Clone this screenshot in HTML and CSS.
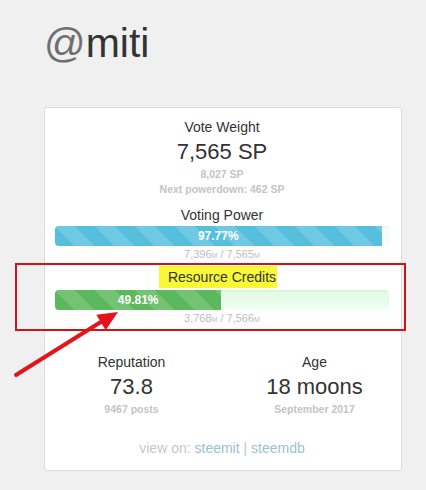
FILE: index.html
```html
<!DOCTYPE html>
<html>
<head>
<meta charset="utf-8">
<link rel="stylesheet" href="styles.css">
</head>
<body>
<div class="page">
  <h1 class="title"><span class="at">@</span>miti</h1>
  <div class="card">
    <div class="label">Vote Weight</div>
    <div class="big">7,565 SP</div>
    <div class="sub">8,027 SP</div>
    <div class="sub">Next powerdown: 462 SP</div>

    <div class="label vp">Voting Power</div>
    <div class="bar bar-blue">
      <div class="fill fill-blue" style="width:97.77%">97.77%</div>
    </div>
    <div class="nums">7,396<small>M</small> / 7,565<small>M</small></div>

    <div class="label rc"><span class="hl">Resource Credits</span></div>
    <div class="bar bar-green">
      <div class="fill fill-green" style="width:49.81%">49.81%</div>
    </div>
    <div class="nums">3,768<small>M</small> / 7,566<small>M</small></div>

    <div class="stats">
      <div class="stat">
        <div class="label">Reputation</div>
        <div class="big">73.8</div>
        <div class="sub">9467 posts</div>
      </div>
      <div class="stat">
        <div class="label">Age</div>
        <div class="big">18 moons</div>
        <div class="sub">September 2017</div>
      </div>
    </div>

    <div class="links">view on: <a href="#">steemit</a> | <a href="#">steemdb</a></div>
  </div>
</div>
<div class="redbox"></div>
<svg class="arrow" width="426" height="490" viewBox="0 0 426 490">
  <line x1="16" y1="375" x2="104" y2="320" stroke="#e3151a" stroke-width="4" stroke-linecap="round"/>
  <polygon points="118,312 105.7,330.2 96.3,314.8" fill="#e3151a"/>
</svg>
</body>
</html>
```
FILE: styles.css
```css
html, body {
  margin: 0;
  padding: 0;
}
body {
  background: #f0f0f0;
  font-family: "Liberation Sans", Arial, sans-serif;
  color: #333;
  position: relative;
  width: 426px;
  height: 490px;
  overflow: hidden;
}
.page {
  padding: 18px 0 0 44px;
}
.title {
  margin: 0;
  font-size: 41px;
  line-height: 50px;
  font-weight: normal;
  color: #333;
}
.title .at {
  color: #6f6f6f;
}
.card {
  margin-top: 39px;
  width: 334px;
  background: #fff;
  border: 1px solid #dcdcdc;
  border-radius: 3px;
  padding: 9px 12px 12px 10px;
  text-align: center;
}
.label {
  font-size: 14px;
  line-height: 20px;
  color: #333;
}
.big {
  font-size: 22px;
  line-height: 30px;
  color: #333;
}
.sub {
  font-size: 10.5px;
  line-height: 15px;
  font-weight: bold;
  color: #c4c4c4;
}
.vp {
  margin-top: 8px;
}
.rc {
  margin-top: 5px;
}
.hl {
  background: #f8f835;
  padding: 3px 1px 3px 9px;
  margin-left: -8px;
}
.bar {
  height: 20px;
  border-radius: 4px;
  overflow: hidden;
  margin-top: 1px;
  box-shadow: inset 0 1px 2px rgba(0,0,0,0.06);
}
.bar-blue {
  background: linear-gradient(90deg, #eaf7fc, #f6fcfe);
}
.bar-green {
  margin-top: 3px;
  background: linear-gradient(180deg, #e2fbe2, #effef0);
}
.fill {
  height: 20px;
  line-height: 20px;
  font-size: 12px;
  font-weight: bold;
  color: #fff;
  text-align: center;
  background-size: 40px 40px;
  background-image: linear-gradient(45deg, rgba(255,255,255,0.15) 25%, transparent 25%, transparent 50%, rgba(255,255,255,0.15) 50%, rgba(255,255,255,0.15) 75%, transparent 75%, transparent);
}
.fill-blue {
  background-color: #57bfde;
}
.fill-green {
  background-color: #5cb85c;
}
.nums {
  font-size: 11px;
  line-height: 16px;
  height: 16px;
  color: #bcbcbc;
}
.nums small {
  font-size: 7px;
  line-height: 0;
}
.stats {
  display: grid;
  grid-template-columns: 1fr 1fr;
  margin: 26px -17px 0 -15px;
}
.stats .big {
  line-height: 30px;
}
.links {
  margin-top: 21px;
  font-size: 14px;
  line-height: 20px;
  color: #c6c6c6;
}
.links a {
  color: #9dbfcf;
  text-decoration: none;
}
.redbox {
  position: absolute;
  left: 15px;
  top: 263px;
  width: 391px;
  height: 68px;
  box-sizing: border-box;
  border: 2px solid #d0121a;
}
.arrow {
  position: absolute;
  left: 0;
  top: 0;
  pointer-events: none;
}
```
